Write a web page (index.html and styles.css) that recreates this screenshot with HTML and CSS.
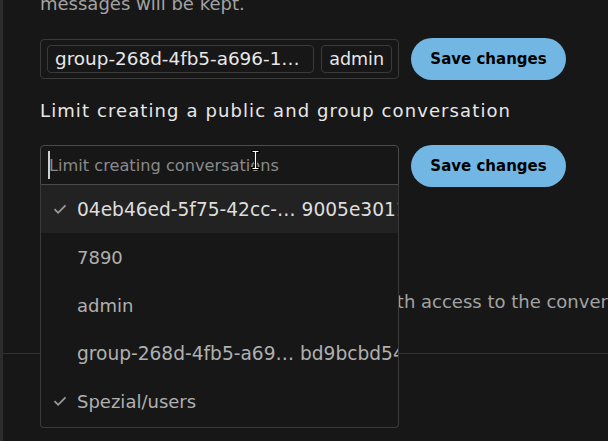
FILE: index.html
```html
<!DOCTYPE html>
<html lang="en">
<head>
<meta charset="utf-8">
<title>Talk settings</title>
<link rel="stylesheet" href="styles.css">
</head>
<body>
<div class="page">
  <div class="edge"></div>
  <main class="main">
    <section class="section">
      <p class="desc desc-top">messages will be kept.</p>
      <div class="row row-center">
        <div class="tagbox">
          <span class="tag tag-wide">group-268d-4fb5-a696-1…</span>
          <span class="tag">admin</span>
        </div>
        <button class="btn" type="button">Save changes</button>
      </div>
      <h3 class="heading">Limit creating a public and group conversation</h3>
      <div class="row row-start">
        <div class="select">
          <div class="input">
            <span class="caret"></span>
            <span class="placeholder">Limit creating conversations</span>
            <svg class="ibeam" width="9" height="20" viewBox="0 0 9 20" aria-hidden="true">
              <path d="M1 1.5h7M1 18.5h7M4.5 1.5v17" stroke="#000" stroke-width="3" fill="none" stroke-linecap="square"/>
              <path d="M1.5 1.5h6M1.5 18.5h6M4.5 1.5v17" stroke="#fff" stroke-width="1.2" fill="none"/>
            </svg>
          </div>
          <ul class="dropdown">
            <li class="option option-active">
              <svg class="check" width="14" height="14" viewBox="0 0 14 14" aria-hidden="true"><path d="M1.5 7.2l3.6 3.6 7.4-7.4" stroke="#9a9a9a" stroke-width="1.8" fill="none"/></svg>
              <span class="label label-id">04eb46ed-5f75-42cc-… 9005e30112ab</span>
            </li>
            <li class="option">
              <span class="check-space"></span>
              <span class="label">7890</span>
            </li>
            <li class="option">
              <span class="check-space"></span>
              <span class="label">admin</span>
            </li>
            <li class="option">
              <span class="check-space"></span>
              <span class="label label-id">group-268d-4fb5-a69… bd9bcbd54a1f</span>
            </li>
            <li class="option">
              <svg class="check" width="14" height="14" viewBox="0 0 14 14" aria-hidden="true"><path d="M1.5 7.2l3.6 3.6 7.4-7.4" stroke="#9a9a9a" stroke-width="1.8" fill="none"/></svg>
              <span class="label">Spezial/users</span>
            </li>
          </ul>
        </div>
        <button class="btn" type="button">Save changes</button>
      </div>
      <p class="desc desc-hidden">Conversations are visible to all users with access to the conversation.</p>
    </section>
  </main>
</div>
</body>
</html>
```

FILE: styles.css
```css
html, body {
  margin: 0;
  padding: 0;
  background: #171717;
  overflow: hidden;
}

body {
  width: 608px;
  height: 441px;
  font-family: "DejaVu Sans", "Noto Sans", sans-serif;
  color: #e6e6e6;
}

.page {
  display: flex;
  height: 441px;
}

.edge {
  width: 3px;
  flex: none;
  background: #2c2c2c;
}

.main {
  flex: 1;
  min-width: 0;
}

.section {
  display: flow-root;
  padding-left: 37px;
  height: 354px;
  border-bottom: 1px solid #333333;
  box-sizing: border-box;
}

.desc {
  margin: 0;
  font-size: 18px;
  line-height: 24px;
  color: #a3a3a3;
  white-space: nowrap;
}

.desc-top {
  margin-top: -8px;
}

.row {
  display: flex;
  gap: 12px;
  width: 527px;
}

.row-center {
  align-items: center;
  margin-top: 22px;
}

.row-start {
  align-items: flex-start;
  margin-top: 22px;
}

.tagbox {
  width: 359px;
  height: 40px;
  box-sizing: border-box;
  border: 1px solid #3a3a3a;
  border-radius: 4px;
  padding: 5px 6px;
  display: flex;
  gap: 7px;
}

.tag {
  box-sizing: border-box;
  height: 28px;
  border: 1px solid #3a3a3a;
  border-radius: 4px;
  padding: 0 7px;
  font-size: 17.5px;
  line-height: 26px;
  color: #e8e8e8;
  white-space: nowrap;
  overflow: hidden;
}

.tag-wide {
  flex: 1;
  font-size: 18.4px;
}

.btn {
  width: 155px;
  height: 42px;
  border: none;
  border-radius: 21px;
  background: #72b7e3;
  color: #000;
  font-family: "DejaVu Sans", "Noto Sans", sans-serif;
  font-weight: bold;
  font-size: 15px;
  padding: 0;
  flex: none;
}

.heading {
  margin: 19px 0 0;
  font-size: 18px;
  font-weight: normal;
  letter-spacing: 1.1px;
  line-height: 24px;
  color: #e8e8e8;
}

.select {
  position: relative;
  width: 359px;
}

.input {
  position: relative;
  height: 40px;
  box-sizing: border-box;
  border: 1px solid #4a4a4a;
  border-radius: 4px 4px 0 0;
  background: #171717;
  display: flex;
  align-items: center;
  padding-left: 7px;
}

.caret {
  width: 2px;
  height: 28px;
  background: #d0d0d0;
  flex: none;
}

.placeholder {
  font-size: 16.2px;
  color: #8a8a8a;
  margin-left: -1px;
  white-space: nowrap;
}

.ibeam {
  position: absolute;
  left: 210px;
  top: 4px;
}

.dropdown {
  position: absolute;
  left: 0;
  top: 100%;
  width: 359px;
  box-sizing: border-box;
  margin: 0;
  padding: 0 0 2px;
  list-style: none;
  background: #171717;
  border: 1px solid #3a3a3a;
  border-top: none;
  border-radius: 0 0 4px 4px;
  z-index: 2;
}

.option {
  height: 48px;
  display: flex;
  align-items: center;
  padding-left: 12px;
  overflow: hidden;
  white-space: nowrap;
  color: #b0b0b0;
  font-size: 18px;
}

.option-active {
  background: #222222;
  color: #dedede;
}

.check, .check-space {
  width: 14px;
  height: 14px;
  flex: none;
  margin-right: 10px;
}

.label {
  flex: none;
}

.label-id {
  font-size: 18.6px;
}

.desc-hidden {
  margin-top: 103px;
}
```
